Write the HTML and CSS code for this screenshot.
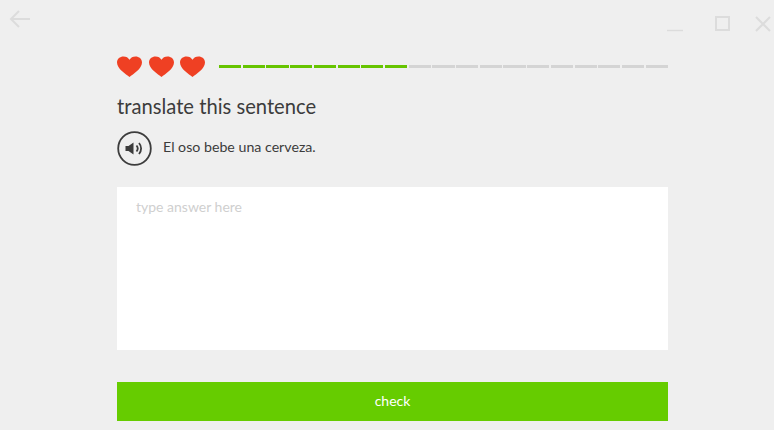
FILE: index.html
```html
<!DOCTYPE html>
<html lang="en">
<head>
  <meta charset="UTF-8" />
  <title>translate this sentence</title>
  <link rel="stylesheet" href="styles.css">
</head>
<body>

  <header class="titlebar">
    <svg class="back" width="22" height="18" viewBox="0 0 22 18"><path d="M21 9H2M10 1L2 9l8 8" /></svg>
    <div class="controls">
      <svg class="min" width="16" height="16" viewBox="0 0 16 16"><path d="M0 14.5h16" /></svg>
      <svg class="max" width="15" height="15" viewBox="0 0 15 15"><path d="M1 1h13v13H1z" /></svg>
      <svg class="close" width="16" height="16" viewBox="0 0 16 16"><path d="M1 1l14 14M15 1L1 15" /></svg>
    </div>
  </header>

  <main class="lesson">
    <div class="status">
      <div class="hearts">
        <svg width="25" height="22" viewBox="0 0 25 22"><path d="M12.500 21C9 18 0 13 0 6.500 0 2.800 3 .5 6.500.5c2.700 0 4.800 1.200 6 3.300C13.700 1.700 15.800.5 18.500.5 22 .5 25 2.800 25 6.500 25 13 16 18 12.500 21z" /></svg>
        <svg width="25" height="22" viewBox="0 0 25 22"><path d="M12.500 21C9 18 0 13 0 6.500 0 2.800 3 .5 6.500.5c2.700 0 4.800 1.200 6 3.300C13.700 1.700 15.800.5 18.500.5 22 .5 25 2.800 25 6.500 25 13 16 18 12.500 21z" /></svg>
        <svg width="25" height="22" viewBox="0 0 25 22"><path d="M12.500 21C9 18 0 13 0 6.500 0 2.800 3 .5 6.500.5c2.700 0 4.800 1.200 6 3.300C13.700 1.700 15.800.5 18.500.5 22 .5 25 2.800 25 6.500 25 13 16 18 12.500 21z" /></svg>
      </div>
      <div class="progress">
        <span class="seg done"></span><span class="seg done"></span><span class="seg done"></span><span class="seg done"></span>
        <span class="seg done"></span><span class="seg done"></span><span class="seg done"></span><span class="seg done"></span>
        <span class="seg"></span><span class="seg"></span><span class="seg"></span><span class="seg"></span>
        <span class="seg"></span><span class="seg"></span><span class="seg"></span><span class="seg"></span>
        <span class="seg"></span><span class="seg"></span><span class="seg"></span>
      </div>
    </div>

    <h1>translate this sentence</h1>

    <div class="prompt">
      <svg class="speaker" width="35" height="35" viewBox="0 0 35 35">
        <circle class="ring" cx="17.500" cy="17.500" r="16.300" />
        <path class="cone" d="M8.500 15h3l5-3.500v12l-5-3.500h-3z" />
        <path class="wave" d="M19.500 14.500c1.500 1.800 1.500 4.200 0 6M22 12c2.800 3.200 2.800 7.800 0 11" />
      </svg>
      <span class="sentence">El oso bebe una cerveza.</span>
    </div>

    <div class="answer">type answer here</div>

    <button class="check" type="button">check</button>
  </main>

</body>
</html>
```

FILE: styles.css
```css
html, body {
  height: 100%;
}
body {
  font-family: Lato, 'Open Sans', sans-serif;
  background-color: #efefef;
  margin: 0;
  padding: 0;
  overflow: hidden;
}

.titlebar {
  display: flex;
  justify-content: space-between;
  align-items: flex-start;
  height: 56px;
  padding: 10px 3px 0 9px;
  box-sizing: border-box;
}
.titlebar svg {
  display: block;
  fill: none;
  stroke: #dcdcdc;
  stroke-width: 2;
}
.controls {
  display: flex;
  gap: 31px;
  padding-top: 6px;
}
.controls .min {
  margin-right: 1px;
}
.controls .max {
  margin-right: -6px;
}
.controls .min path {
  stroke-width: 1.500;
}

.lesson {
  width: 551px;
  margin-left: 117px;
}
.status {
  display: flex;
  align-items: center;
  height: 22px;
}
.hearts {
  display: flex;
  gap: 6.500px;
}
.hearts svg {
  display: block;
  fill: #ef4023;
}
.progress {
  display: flex;
  flex: 1;
  gap: 1.500px;
  margin-left: 14px;
  margin-top: -2px;
}
.seg {
  flex: 1;
  height: 3px;
  background-color: #d4d4d4;
}
.seg.done {
  background-color: #66c400;
}

h1 {
  font-size: 20.200px;
  font-weight: 400;
  color: #3c3c3c;
  margin: 16px 0 0;
  line-height: 24px;
}

.prompt {
  display: flex;
  align-items: center;
  gap: 11px;
  margin-top: 13px;
}
.speaker {
  display: block;
  fill: none;
  stroke: #3c3c3c;
}
.ring {
  stroke-width: 1.800;
}
.cone {
  fill: #3c3c3c;
  stroke: none;
}
.wave {
  stroke-width: 1.800;
}
.sentence {
  padding-bottom: 4px;
  font-size: 14.200px;
  color: #3c3c3c;
}

.answer {
  height: 163px;
  margin-top: 21px;
  padding: 11px 19px;
  box-sizing: border-box;
  background-color: white;
  font-size: 14px;
  line-height: 17px;
  color: #cfcfcf;
}

.check {
  display: block;
  width: 100%;
  height: 39px;
  margin-top: 32px;
  padding: 0 0 2px;
  border: none;
  background-color: #66cc00;
  color: white;
  font-family: inherit;
  font-size: 14px;
}
```
